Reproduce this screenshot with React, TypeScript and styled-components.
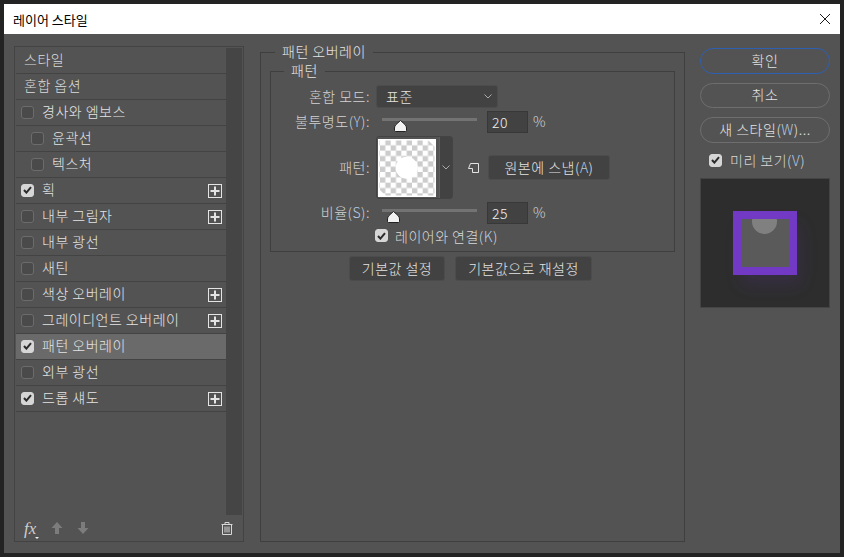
import React from 'react';
import styled, { createGlobalStyle } from 'styled-components';

const GlobalStyle = createGlobalStyle`
  html, body {
    margin: 0;
    padding: 0;
    background: #232323;
  }
  * {
    box-sizing: border-box;
  }
`;

const colors = {
  panel: '#535353',
  line: '#434343',
  well: '#454545',
  text: '#e4e4e4',
  field: '#424242',
  accent: '#b4cde6',
};

const Screen = styled.div`
  width: 844px;
  height: 557px;
  padding: 4px;
  background: #232323;
  font-family: 'Noto Sans CJK KR', 'Noto Sans', sans-serif;
  font-size: 14px;
  letter-spacing: 0.5px;
  font-weight: 300;
  color: ${colors.text};
  overflow: hidden;
`;

const Window = styled.div`
  width: 836px;
  height: 549px;
  display: flex;
  flex-direction: column;
  background: ${colors.panel};
`;

const TitleBar = styled.div`
  height: 30px;
  flex: none;
  display: flex;
  align-items: center;
  justify-content: space-between;
  padding: 0 9px 0 9px;
  background: #fff;
  color: #000;
  font-size: 13px;
  font-weight: 400;
  letter-spacing: 0;
`;

const Body = styled.div`
  flex: 1;
  display: flex;
  padding: 12px 10px 11px 10px;
`;

const StylesPanel = styled.div`
  position: relative;
  width: 230px;
  height: 496px;
  flex: none;
  padding: 1px;
  border: 1px solid ${colors.line};
  display: flex;
`;

const RowList = styled.div`
  width: 210px;
  flex: none;
`;

const Scrollbar = styled.div`
  width: 16px;
  height: 467px;
  background: ${colors.well};
`;

const Row = styled.div<{ $indent?: number; $selected?: boolean }>`
  height: 26px;
  display: flex;
  align-items: center;
  justify-content: space-between;
  padding: 0 4px 1px ${(p) => p.$indent ?? 5}px;
  border-bottom: 1px solid ${colors.line};
  background: ${(p) => (p.$selected ? '#6a6a6a' : 'transparent')};
`;

const RowMain = styled.div`
  display: flex;
  align-items: center;
  gap: 8px;
  white-space: nowrap;
`;

const RowText = styled.span`
  margin-top: -2px;
`;

const PlainLabel = styled.span`
  padding-left: 3px;
  margin-top: -2px;
  color: #dcdcdc;
`;

const CheckBox = styled.span<{ $checked?: boolean }>`
  width: 13px;
  height: 13px;
  flex: none;
  display: inline-flex;
  align-items: center;
  justify-content: center;
  border-radius: 3px;
  background: ${(p) => (p.$checked ? '#d6d6d6' : '#4a4a4a')};
  border: 1px solid ${(p) => (p.$checked ? '#d6d6d6' : '#6c6c6c')};
`;

const PlusBox = styled.span`
  width: 14px;
  height: 14px;
  flex: none;
  margin-top: 2px;
  display: inline-flex;
  align-items: center;
  justify-content: center;
  border: 1px solid #e4e4e4;
`;

const PanelFooter = styled.div`
  position: absolute;
  left: 9px;
  right: 10px;
  bottom: 2px;
  height: 22px;
  display: flex;
  align-items: center;
  gap: 14px;
`;

const FooterSpacer = styled.div`
  flex: 1;
`;

const Fx = styled.span`
  position: relative;
  width: 13px;
  font-family: 'Liberation Serif', serif;
  font-style: italic;
  font-size: 17px;
  letter-spacing: 0;
  color: #cfcfcf;
  line-height: 1;
  &::after {
    content: '';
    position: absolute;
    right: -2px;
    bottom: -2px;
    border: 2px solid transparent;
    border-top-color: #f0f0f0;
    border-bottom-width: 0;
  }
`;

const Middle = styled.div`
  width: 425px;
  flex: none;
  margin-left: 16px;
  height: 490px;
  margin-top: 6px;
`;

const Group = styled.div`
  position: relative;
  border: 1px solid #3f3f3f;
`;

const OuterGroup = styled(Group)`
  height: 100%;
  padding: 18px 9px 0 9px;
`;

const InnerGroup = styled(Group)`
  height: 181px;
  padding: 13px 0 0 0;
`;

const Legend = styled.span<{ $left: number }>`
  position: absolute;
  top: -11px;
  left: ${(p) => p.$left}px;
  padding: 0 7px;
  line-height: 18px;
  background: ${colors.panel};
  white-space: nowrap;
`;

const FieldRow = styled.div<{ $height: number; $top?: number }>`
  display: flex;
  align-items: center;
  height: ${(p) => p.$height}px;
  margin-top: ${(p) => p.$top ?? 0}px;
`;

const FieldLabel = styled.span`
  width: 99px;
  flex: none;
  text-align: right;
  color: #d4d4d4;
  white-space: nowrap;
  margin-top: -2px;
`;

const Mnemonic = styled.span`
  color: ${colors.accent};
`;

const Select = styled.div`
  width: 122px;
  height: 23px;
  margin-left: 6px;
  padding: 0 5px 1px 9px;
  display: flex;
  align-items: center;
  justify-content: space-between;
  background: ${colors.field};
  border: 1px solid #4c4c4c;
  border-radius: 3px;
`;

const SliderBox = styled.div`
  position: relative;
  width: 95px;
  height: 3px;
  margin-left: 12px;
  margin-top: -6px;
  background: #737373;
`;

const Thumb = styled.svg<{ $x: number }>`
  position: absolute;
  left: ${(p) => p.$x}px;
  top: 2px;
`;

const NumberField = styled.div`
  width: 41px;
  height: 22px;
  margin-left: 10px;
  padding: 0 0 1px 4px;
  display: flex;
  align-items: center;
  background: ${colors.field};
  border: 1px solid #383838;
  color: #f0f0f0;
`;

const Percent = styled.span`
  margin: -2px 0 0 5px;
  color: #cfcfcf;
`;

const SwatchWrap = styled.div`
  width: 77px;
  height: 63px;
  margin-left: 6px;
  display: flex;
  border: 1px solid #434343;
  border-radius: 3px;
`;

const SwatchArrow = styled.div`
  width: 13px;
  flex: none;
  display: flex;
  align-items: center;
  justify-content: center;
  background: ${colors.field};
  border-left: 1px solid #5e5e5e;
`;

const SwatchDraw = styled.svg`
  width: 58px;
  height: 58px;
  flex: none;
  display: block;
  margin: 2px 3px 1px 1px;
`;

const SnapIcon = styled.svg`
  margin-left: 15px;
  flex: none;
`;

const DarkButton = styled.div<{ $width: number }>`
  width: ${(p) => p.$width}px;
  height: 25px;
  flex: none;
  display: flex;
  align-items: center;
  justify-content: center;
  padding-bottom: 2px;
  background: ${colors.field};
  border: 1px solid #4c4c4c;
  border-radius: 3px;
  white-space: nowrap;
`;

const CheckLine = styled.div`
  display: flex;
  align-items: center;
  gap: 7px;
  height: 17px;
  white-space: nowrap;
`;

const LinkRow = styled(CheckLine)`
  margin: 3px 0 0 104px;
  color: #d8d8d8;
`;

const SnapButton = styled(DarkButton)`
  margin-left: 9px;
`;

const DefaultButtons = styled.div`
  display: flex;
  gap: 10px;
  margin: 4px 0 0 79px;
`;

const SideColumn = styled.div`
  width: 130px;
  flex: none;
  margin-left: 15px;
  padding-top: 2px;
  display: flex;
  flex-direction: column;
`;

const PillButton = styled.div<{ $primary?: boolean }>`
  height: 25.5px;
  margin-bottom: 9px;
  padding-bottom: 2px;
  display: flex;
  align-items: center;
  justify-content: center;
  border-radius: 13px;
  border: 1.5px solid ${(p) => (p.$primary ? '#2f5fb0' : '#6e6e6e')};
  white-space: nowrap;
`;

const PreviewCheck = styled(CheckLine)`
  margin: 0 0 9px 9px;
  gap: 8px;
  color: #d8d8d8;
`;

const Preview = styled.div`
  width: 130px;
  height: 130px;
  display: flex;
  align-items: center;
  justify-content: center;
  background: #2d2d2d;
  border: 1px solid #444;
`;

const PreviewSquare = styled.div`
  position: relative;
  width: 64px;
  height: 64px;
  border: 8px solid #7239c4;
  background: #5a5a5a;
  box-shadow: 6px 12px 16px -2px rgba(114, 57, 196, 0.14);
`;

const PreviewDotClip = styled.div`
  position: absolute;
  inset: 0;
  overflow: hidden;
`;

const PreviewDot = styled.div`
  position: absolute;
  left: 11px;
  top: -10px;
  width: 25px;
  height: 25px;
  border-radius: 50%;
  background: #808080;
`;

const Check = () => (
  <svg width="9" height="8" viewBox="0 0 9 8">
    <path d="M1 4l2.400 2.600L8 1.200" fill="none" stroke="#2b2b2b" strokeWidth="2" />
  </svg>
);

const Box = ({ checked }: { checked?: boolean }) => (
  <CheckBox $checked={checked}>{checked && <Check />}</CheckBox>
);

const Plus = () => (
  <PlusBox>
    <svg width="10" height="10" viewBox="0 0 10 10">
      <path d="M5 0.500v9M0.500 5h9" stroke="#e4e4e4" strokeWidth="2" />
    </svg>
  </PlusBox>
);

const Chevron = ({ color = '#aaa' }: { color?: string }) => (
  <svg width="8" height="5" viewBox="0 0 8 5">
    <path d="M0.500 0.500L4 4l3.500-3.500" fill="none" stroke={color} strokeWidth="1" />
  </svg>
);

const SliderThumb = ({ x }: { x: number }) => (
  <Thumb $x={x} width="13" height="12" viewBox="0 0 13 12">
    <path
      d="M6.500 0.500L11 4.500Q12.500 6 12.500 8v2.500q0 1-1 1h-10q-1 0-1-1V8q0-2 1.500-3.500z"
      fill="#f2f2f2"
      stroke="#222"
      strokeWidth="1"
    />
  </Thumb>
);

const Arrow = ({ down }: { down?: boolean }) => (
  <svg width="12" height="12" viewBox="0 0 12 12">
    <path
      d={down ? 'M4 0h4v6h3.500L6 12 .5 6H4z' : 'M6 0l5.500 6H8v6H4V6H.5z'}
      fill="#7c7c7c"
    />
  </svg>
);

const Trash = () => (
  <svg width="12" height="13" viewBox="0 0 12 13">
    <path
      d="M.5 2.500h11M4 2.500V.5h4v2M1.500 2.500v10h9v-10M4 4.500v6M6 4.500v6M8 4.500v6"
      fill="none"
      stroke="#d8d8d8"
      strokeWidth="1"
    />
  </svg>
);

const styleRows: { label: string; indent?: number; checked?: boolean; plus?: boolean; selected?: boolean }[] = [
  { label: '경사와 엠보스' },
  { label: '윤곽선', indent: 15 },
  { label: '텍스처', indent: 15 },
  { label: '획', checked: true, plus: true },
  { label: '내부 그림자', plus: true },
  { label: '내부 광선' },
  { label: '새틴' },
  { label: '색상 오버레이', plus: true },
  { label: '그레이디언트 오버레이', plus: true },
  { label: '패턴 오버레이', checked: true, selected: true },
  { label: '외부 광선' },
  { label: '드롭 섀도', checked: true, plus: true },
];

export default function App() {
  return (
    <Screen>
      <GlobalStyle />
      <Window>
        <TitleBar>
          <span>레이어 스타일</span>
          <svg width="12" height="12" viewBox="0 0 12 12">
            <path d="M1 1l10 10M11 1L1 11" stroke="#1a1a1a" strokeWidth="1" />
          </svg>
        </TitleBar>
        <Body>
          <StylesPanel>
            <RowList>
              <Row><PlainLabel>스타일</PlainLabel></Row>
              <Row><PlainLabel>혼합 옵션</PlainLabel></Row>
              {styleRows.map((row) => (
                <Row key={row.label} $indent={row.indent} $selected={row.selected}>
                  <RowMain>
                    <Box checked={row.checked} />
                    <RowText>{row.label}</RowText>
                  </RowMain>
                  {row.plus && <Plus />}
                </Row>
              ))}
            </RowList>
            <Scrollbar />
            <PanelFooter>
              <Fx>fx</Fx>
              <Arrow />
              <Arrow down />
              <FooterSpacer />
              <Trash />
            </PanelFooter>
          </StylesPanel>

          <Middle>
            <OuterGroup>
              <Legend $left={14}>패턴 오버레이</Legend>
              <InnerGroup>
                <Legend $left={13}>패턴</Legend>
                <FieldRow $height={23}>
                  <FieldLabel>혼합 모드:</FieldLabel>
                  <Select>
                    표준
                    <Chevron />
                  </Select>
                </FieldRow>
                <FieldRow $height={22} $top={3}>
                  <FieldLabel>불투명도(<Mnemonic>Y</Mnemonic>):</FieldLabel>
                  <SliderBox><SliderThumb x={12} /></SliderBox>
                  <NumberField>20</NumberField>
                  <Percent>%</Percent>
                </FieldRow>
                <FieldRow $height={63} $top={3}>
                  <FieldLabel>패턴:</FieldLabel>
                  <SwatchWrap>
                    <SwatchDraw viewBox="0 0 58 58">
                      <defs>
                        <pattern id="checker" width="10.670" height="10.670" patternUnits="userSpaceOnUse" x="2" y="1">
                          <rect width="10.670" height="10.670" fill="#fff" />
                          <rect x="5.335" width="5.335" height="5.335" fill="#cccccc" />
                          <rect y="5.335" width="5.335" height="5.335" fill="#cccccc" />
                        </pattern>
                      </defs>
                      <rect width="58" height="58" fill="url(#checker)" />
                      <path d="M0 0h58v58H0zM1.500 1.500v55h55v-55z" fill="#fff" fillRule="evenodd" />
                      <circle cx="28.700" cy="28.700" r="11" fill="#fff" />
                      <path d="M49 0h9v9zM0 49l9 9H0z" fill="#fff" />
                    </SwatchDraw>
                    <SwatchArrow><Chevron /></SwatchArrow>
                  </SwatchWrap>
                  <SnapIcon width="11" height="10" viewBox="0 0 11 10">
                    <path d="M2.500 .5h8v9h-6v-4h-4z" fill="none" stroke="#e4e4e4" strokeWidth="1" />
                  </SnapIcon>
                  <SnapButton $width={122}>원본에 스냅(<Mnemonic>A</Mnemonic>)</SnapButton>
                </FieldRow>
                <FieldRow $height={22} $top={3}>
                  <FieldLabel>비율(<Mnemonic>S</Mnemonic>):</FieldLabel>
                  <SliderBox><SliderThumb x={5} /></SliderBox>
                  <NumberField>25</NumberField>
                  <Percent>%</Percent>
                </FieldRow>
                <LinkRow>
                  <Box checked />
                  <span>레이어와 연결(<Mnemonic>K</Mnemonic>)</span>
                </LinkRow>
              </InnerGroup>
              <DefaultButtons>
                <DarkButton $width={96}>기본값 설정</DarkButton>
                <DarkButton $width={137}>기본값으로 재설정</DarkButton>
              </DefaultButtons>
            </OuterGroup>
          </Middle>

          <SideColumn>
            <PillButton $primary>확인</PillButton>
            <PillButton>취소</PillButton>
            <PillButton>새 스타일(<Mnemonic>W</Mnemonic>)...</PillButton>
            <PreviewCheck>
              <Box checked />
              <span>미리 보기(<Mnemonic>V</Mnemonic>)</span>
            </PreviewCheck>
            <Preview>
              <PreviewSquare>
                <PreviewDotClip><PreviewDot /></PreviewDotClip>
              </PreviewSquare>
            </Preview>
          </SideColumn>
        </Body>
      </Window>
    </Screen>
  );
}
